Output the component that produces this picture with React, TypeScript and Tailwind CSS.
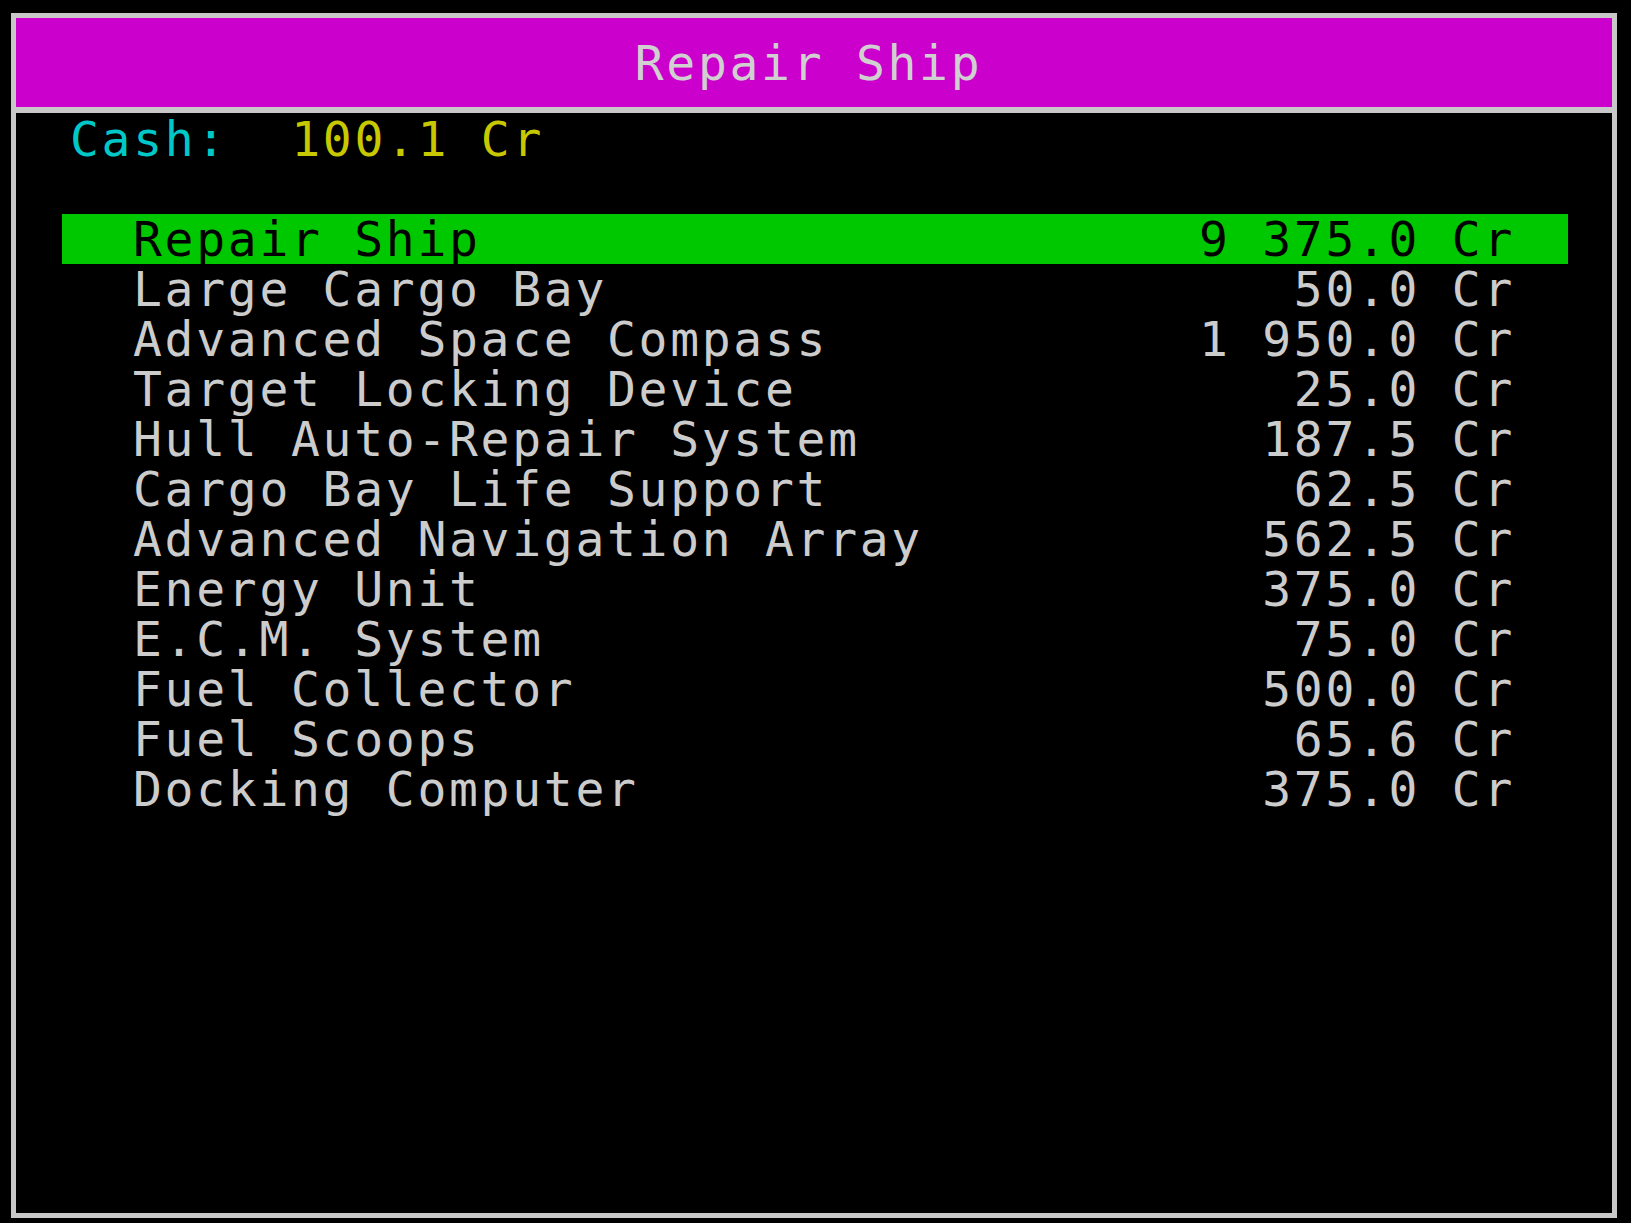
import React from "react";

// --- Equipment list shown on the repair screen ---
interface Item {
    name: string;
    price: string;
}

const ITEMS: Item[] = [
    { name: "Repair Ship", price: "9 375.0 Cr" },
    { name: "Large Cargo Bay", price: "50.0 Cr" },
    { name: "Advanced Space Compass", price: "1 950.0 Cr" },
    { name: "Target Locking Device", price: "25.0 Cr" },
    { name: "Hull Auto-Repair System", price: "187.5 Cr" },
    { name: "Cargo Bay Life Support", price: "62.5 Cr" },
    { name: "Advanced Navigation Array", price: "562.5 Cr" },
    { name: "Energy Unit", price: "375.0 Cr" },
    { name: "E.C.M. System", price: "75.0 Cr" },
    { name: "Fuel Collector", price: "500.0 Cr" },
    { name: "Fuel Scoops", price: "65.6 Cr" },
    { name: "Docking Computer", price: "375.0 Cr" },
];

const App = () => {
    const selected = 0;

    return (
        <div
            className="h-screen bg-black pt-[13px] pl-[11px] pr-[14px] pb-[5px] flex flex-col text-[48px] leading-[50px] tracking-[2.7px] whitespace-pre"
            style={{ fontFamily: '"DejaVu Sans Mono", "Liberation Mono", monospace' }}
        >
            <div className="flex-1 flex flex-col border-[5px] border-[#c8c8c8] bg-black">
                {/* --- TITLE BAR --- */}
                <div className="h-[89px] shrink-0 bg-[#cc00cc] border-b-[6px] border-[#c8c8c8] box-content flex items-center justify-center pr-[11px] text-[#d0d0d0]">
                    Repair Ship
                </div>

                {/* --- CONTENT --- */}
                <div className="pt-[1px] pl-[54px]">
                    <div className="h-[50px]">
                        <span className="text-[#00c8c8]">Cash:  </span>
                        <span className="text-[#c8c800]">100.1 Cr</span>
                    </div>
                    <div className="h-[50px]"></div>
                </div>

                <div className="ml-[46px] mr-[44px] flex flex-col">
                    {ITEMS.map((item, i) => (
                        <div
                            key={item.name}
                            className={
                                i === selected
                                    ? "h-[50px] flex justify-between pl-[71px] pr-[53px] bg-[#00c800] text-black"
                                    : "h-[50px] flex justify-between pl-[71px] pr-[53px] text-[#cccccc]"
                            }
                        >
                            <span>{item.name}</span>
                            <span>{item.price}</span>
                        </div>
                    ))}
                </div>
            </div>
        </div>
    );
};

export default App;
